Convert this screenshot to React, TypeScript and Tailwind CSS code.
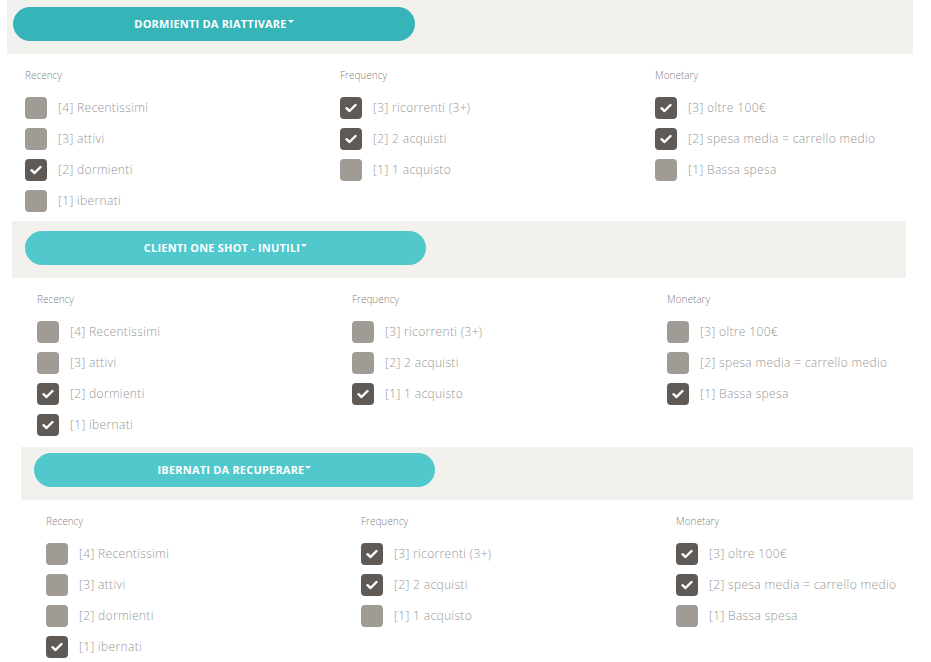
import React from "react";

type Item = { label: string; checked: boolean };

const Check = ({ checked }: { checked: boolean }) => (
  <div
    className={
      "w-[22px] h-[22px] rounded-[4px] flex items-center justify-center shrink-0 " +
      (checked ? "bg-[#5f5a55]" : "bg-[#a19b95]")
    }
  >
    {checked && (
      <svg width="12" height="10" viewBox="0 0 12 10">
        <path d="M1.5 5.2 L4.5 8 L10.5 2" fill="none" stroke="white" strokeWidth="2.4" strokeLinecap="round" strokeLinejoin="round" />
      </svg>
    )}
  </div>
);

const Column = ({ title, items, gap }: { title: string; items: Item[]; gap: string }) => (
  <div className="flex flex-col">
    <div className="text-[10px] font-light leading-[12px] text-[#7f7f7f] h-[12px]">{title}</div>
    <div className={"flex flex-col gap-[9px] " + gap}>
      {items.map((it, i) => (
        <div key={i} className="flex items-center h-[22px]">
          <Check checked={it.checked} />
          <span className="ml-[11px] text-[12px] font-light tracking-[0.35px] text-[#969696] whitespace-nowrap">{it.label}</span>
        </div>
      ))}
    </div>
  </div>
);

const rec = ["[4] Recentissimi", "[3] attivi", "[2] dormienti", "[1] ibernati"];
const freq = ["[3] ricorrenti (3+)", "[2] 2 acquisti", "[1] 1 acquisto"];
const mon = ["[3] oltre 100€", "[2] spesa media = carrello medio", "[1] Bassa spesa"];

const mk = (labels: string[], checks: boolean[]) => labels.map((l, i) => ({ label: l, checked: checks[i] }));

const Section = ({
  title,
  outer,
  band,
  button,
  content,
  gap,
  r,
  f,
  m,
}: {
  title: string;
  outer: string;
  band: string;
  button: string;
  content: string;
  gap: string;
  r: boolean[];
  f: boolean[];
  m: boolean[];
}) => (
  <div className={outer}>
    <div className={band}>
      <div className={button}>
        <span className="text-white font-bold text-[11px] tracking-[0.2px] uppercase">{title}</span>
        <svg width="6" height="4" viewBox="0 0 6 4" className="ml-[1px] mb-[4px]">
          <path d="M0 0 L6 0 L3 3 Z" fill="white" />
        </svg>
      </div>
    </div>
    <div className={content}>
      <div className="grid grid-cols-[315px_315px_1fr]">
        <Column title="Recency" items={mk(rec, r)} gap={gap} />
        <Column title="Frequency" items={mk(freq, f)} gap={gap} />
        <Column title="Monetary" items={mk(mon, m)} gap={gap} />
      </div>
    </div>
  </div>
);

export default function App() {
  return (
    <div className="w-[931px] h-[662px] bg-white overflow-hidden" style={{ fontFamily: '"Open Sans", "Liberation Sans", sans-serif' }}>
      <Section
        title="Dormienti da riattivare"
        outer="ml-[7px] w-[906px]"
        band="h-[54px] bg-[#f2f1ee] pl-[6px] pt-[7px]"
        button="w-[402px] h-[34px] rounded-full bg-[#36b4b7] flex items-center justify-center"
        content="pl-[18px] pt-[15px] pb-[9px]"
        gap="mt-[16px]"
        r={[false, false, true, false]}
        f={[true, true, false]}
        m={[true, true, false]}
      />
      <Section
        title="Clienti one shot - inutili"
        outer="ml-[12px] w-[894px]"
        band="h-[57px] bg-[#f2f1ee] pl-[13px] pt-[10px]"
        button="w-[401px] h-[34px] rounded-full bg-[#50c8cc] flex items-center justify-center"
        content="pl-[25px] pt-[15px] pb-[11px]"
        gap="mt-[16px]"
        r={[false, false, true, true]}
        f={[false, false, true]}
        m={[false, false, true]}
      />
      <Section
        title="Ibernati da recuperare"
        outer="ml-[21px] w-[892px]"
        band="h-[53px] bg-[#f2f1ee] pl-[13px] pt-[6px]"
        button="w-[401px] h-[34px] rounded-full bg-[#50c8cc] flex items-center justify-center"
        content="pl-[25px] pt-[15px]"
        gap="mt-[16px]"
        r={[false, false, false, true]}
        f={[true, true, false]}
        m={[true, true, false]}
      />
    </div>
  );
}
